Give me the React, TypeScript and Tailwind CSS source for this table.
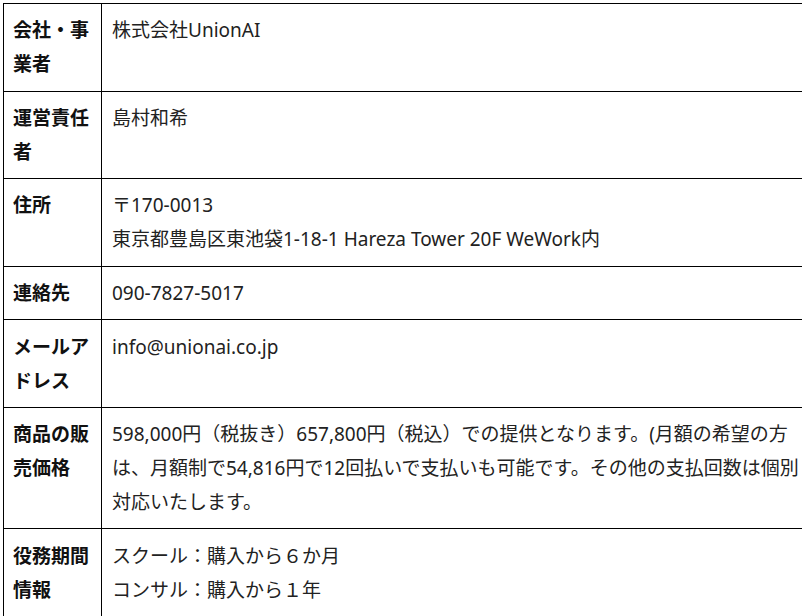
const rows: { label: string; lines: string[] }[] = [
  { label: "会社・事業者", lines: ["株式会社UnionAI"] },
  { label: "運営責任者", lines: ["島村和希"] },
  {
    label: "住所",
    lines: ["〒170-0013", "東京都豊島区東池袋1-18-1 Hareza Tower 20F WeWork内"],
  },
  { label: "連絡先", lines: ["090-7827-5017"] },
  { label: "メールアドレス", lines: ["info@unionai.co.jp"] },
  {
    label: "商品の販売価格",
    lines: [
      "598,000円（税抜き）657,800円（税込）での提供となります。(月額の希望の方は、月額制で54,816円で12回払いで支払いも可能です。その他の支払回数は個別対応いたします。",
    ],
  },
  {
    label: "役務期間情報",
    lines: ["スクール：購入から６か月", "コンサル：購入から１年"],
  },
];

export default function App() {
  return (
    <div
      className="w-[802px] h-[616px] overflow-hidden bg-white pt-[3px] pl-[3px]"
      style={{ fontFamily: '"Noto Sans", "Noto Sans CJK JP", sans-serif' }}
    >
      <table className="border-collapse w-[799px] table-fixed">
        <colgroup>
          <col className="w-[98px]" />
          <col />
        </colgroup>
        <tbody>
          {rows.map((r) => (
            <tr key={r.label}>
              <th className="border border-black text-left align-top font-bold text-[19px] leading-[34px] text-[#111] pl-[9px] pr-[6px] pt-[9.2px] pb-[9.4px]">
                {r.label}
              </th>
              <td className="border-t border-b border-l border-black align-top text-[19px] leading-[34px] text-[#222] pl-[10px] pr-0 pt-[9.2px] pb-[9.4px]">
                {r.lines.map((l) => (
                  <div key={l}>{l}</div>
                ))}
              </td>
            </tr>
          ))}
        </tbody>
      </table>
    </div>
  );
}
